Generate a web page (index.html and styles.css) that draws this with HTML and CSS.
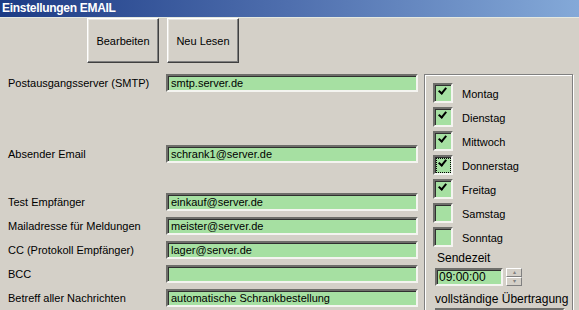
FILE: index.html
```html
<!DOCTYPE html>
<html lang="de">
<head>
    <meta charset="UTF-8">
    <title>Einstellungen EMAIL</title>
    <link rel="stylesheet" href="styles.css">
</head>
<body>
    <div class="titlebar">Einstellungen EMAIL</div>
    <div class="toolbar">
        <button class="btn">Bearbeiten</button>
        <button class="btn">Neu Lesen</button>
    </div>
    <div class="main">
        <div class="form">
            <div class="row first">
                <span class="label">Postausgangsserver (SMTP)</span>
                <div class="field">smtp.server.de</div>
            </div>
            <div class="row second">
                <span class="label">Absender Email</span>
                <div class="field">schrank1@server.de</div>
            </div>
            <div class="row third">
                <span class="label">Test Empfänger</span>
                <div class="field">einkauf@server.de</div>
            </div>
            <div class="row">
                <span class="label">Mailadresse für Meldungen</span>
                <div class="field">meister@server.de</div>
            </div>
            <div class="row">
                <span class="label">CC (Protokoll Empfänger)</span>
                <div class="field">lager@server.de</div>
            </div>
            <div class="row">
                <span class="label">BCC</span>
                <div class="field"></div>
            </div>
            <div class="row">
                <span class="label">Betreff aller Nachrichten</span>
                <div class="field">automatische Schrankbestellung</div>
            </div>
        </div>
        <div class="group">
            <div class="day"><span class="check on"></span><span>Montag</span></div>
            <div class="day"><span class="check on"></span><span>Dienstag</span></div>
            <div class="day"><span class="check on"></span><span>Mittwoch</span></div>
            <div class="day"><span class="check on focus"></span><span>Donnerstag</span></div>
            <div class="day"><span class="check on"></span><span>Freitag</span></div>
            <div class="day"><span class="check"></span><span>Samstag</span></div>
            <div class="day"><span class="check"></span><span>Sonntag</span></div>
            <div class="time-label">Sendezeit</div>
            <div class="time-row">
                <div class="field time">09:00:00</div>
                <div class="spin">
                    <span class="spin-btn">&#9652;</span>
                    <span class="spin-btn">&#9662;</span>
                </div>
            </div>
            <div class="full-label">vollständige Übertragung</div>
            <div class="field select"></div>
        </div>
    </div>
</body>
</html>
```

FILE: styles.css
```css
body {
    margin: 0;
    background: #d4d0c8;
    font-family: 'Liberation Sans', Arial, sans-serif;
    font-size: 11px;
    color: #000000;
    overflow: hidden;
    height: 310px;
}
.titlebar {
    height: 17px;
    line-height: 16px;
    padding-left: 2px;
    background: linear-gradient(to right, #1c3b85, #4f6fae 50%, #84a9d8);
    color: #ffffff;
    font-weight: bold;
    font-size: 12px;
    letter-spacing: -0.3px;
    border-bottom: 1px solid #e4e8e0;
}
.toolbar {
    display: flex;
    gap: 8px;
    padding-left: 87px;
}
.btn {
    width: 72px;
    height: 45px;
    background: #d4d0c8;
    font-family: inherit;
    font-size: 11px;
    color: #000000;
    border: 1px solid;
    border-color: #ffffff #404040 #404040 #ffffff;
    box-shadow: inset -1px -1px #808080, inset 1px 1px #e8e6e0;
    padding: 0;
}
.main {
    display: flex;
    align-items: flex-start;
    margin-top: 10px;
}
.form {
    width: 424px;
    flex-shrink: 0;
}
.row {
    display: flex;
    align-items: center;
    height: 18px;
    margin-bottom: 6px;
}
.row.first {
    margin-top: 1px;
    margin-bottom: 53px;
}
.row.second {
    margin-bottom: 30px;
}
.label {
    width: 158px;
    padding-left: 8px;
    white-space: nowrap;
}
.field {
    box-sizing: border-box;
    height: 18px;
    width: 252px;
    background: #a6e0a2;
    border: 2px solid;
    border-color: #6e6e6a #f4f4f0 #f4f4f0 #6e6e6a;
    box-shadow: inset 1px 1px #303030;
    padding-left: 3px;
    line-height: 14px;
    white-space: nowrap;
}
.group {
    box-sizing: border-box;
    width: 149px;
    height: 260px;
    margin-top: 1px;
    border: 1px solid #808080;
    box-shadow: inset 1px 1px #ffffff, 1px 1px #ffffff;
    padding: 8px 0 0 8px;
}
.day {
    display: flex;
    align-items: center;
    gap: 9px;
    height: 20px;
    margin-bottom: 4px;
}
.day span:last-child {
    padding-top: 1px;
}
.check {
    position: relative;
    box-sizing: border-box;
    width: 20px;
    height: 20px;
    background: #a6e0a2;
    border: 2px solid;
    border-color: #6e6e6a #f4f4f0 #f4f4f0 #6e6e6a;
    box-shadow: inset 1px 1px #303030;
}
.check.on::after {
    content: "";
    position: absolute;
    left: 5px;
    top: 1px;
    width: 3px;
    height: 6px;
    border: solid #000000;
    border-width: 0 2px 2px 0;
    transform: rotate(40deg);
}
.check.focus::before {
    content: "";
    position: absolute;
    left: 1px;
    top: 1px;
    right: 0;
    bottom: 0;
    border: 1px dotted #000000;
}
.time-label {
    padding-left: 4px;
    font-size: 12px;
}
.time-row {
    display: flex;
    align-items: center;
    gap: 3px;
    margin-top: 3px;
    margin-left: 2px;
}
.field.time {
    width: 68px;
    font-size: 12px;
    padding-left: 2px;
}
.spin {
    display: flex;
    flex-direction: column;
    width: 16px;
    height: 18px;
}
.spin-btn {
    box-sizing: border-box;
    height: 9px;
    font-size: 6px;
    line-height: 7px;
    text-align: center;
    color: #808080;
    background: #d4d0c8;
    border: 1px solid;
    border-color: #ffffff #808080 #808080 #ffffff;
}
.full-label {
    margin-top: 6px;
    padding-left: 2px;
    font-size: 12px;
}
.field.select {
    width: 130px;
    margin-left: 2px;
    margin-top: 2px;
}
```
